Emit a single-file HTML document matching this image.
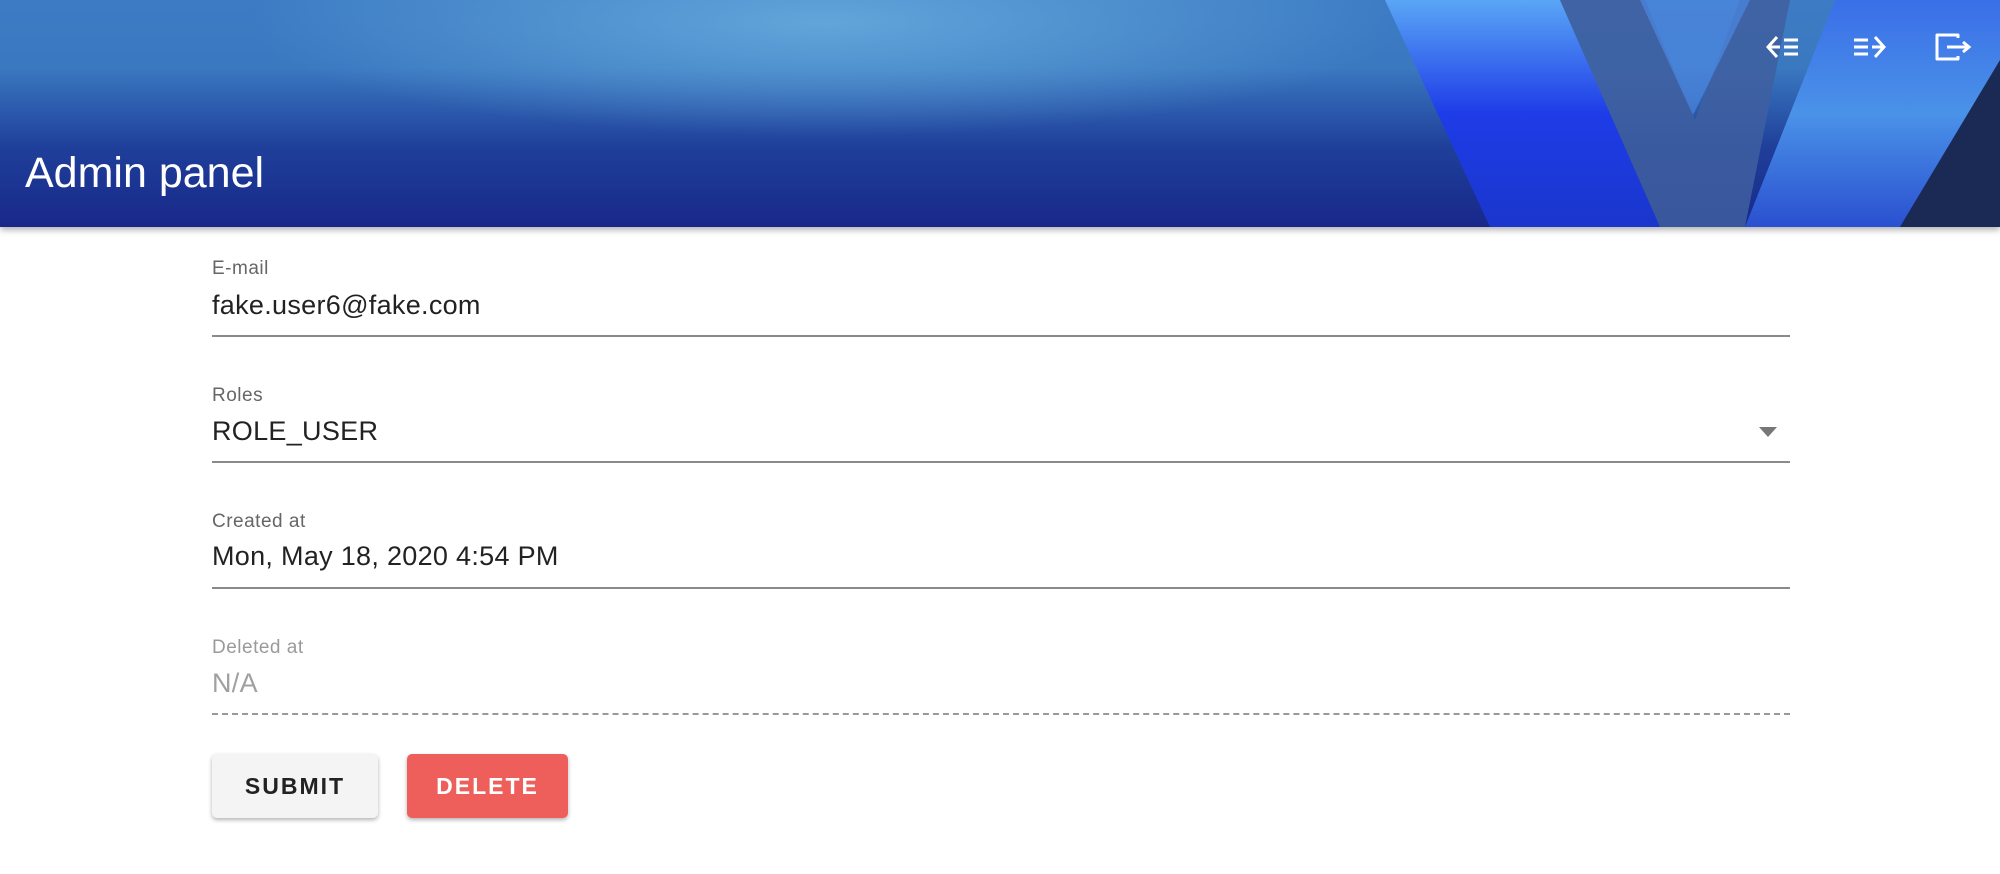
<!DOCTYPE html>
<html><head><meta charset="utf-8"><style>
body{margin:0;width:2000px;height:874px;background:#fff;font-family:"Liberation Sans",Arial,sans-serif;position:relative;overflow:hidden}
.hdr{position:absolute;left:0;top:0;width:2000px;height:227px;overflow:hidden;
background:linear-gradient(180deg,#3d7cc4 0%,#3a78c0 30%,#1f3f9a 65%,#18288a 100%);box-shadow:0 3px 6px rgba(0,0,0,.3)}
.hdr svg{position:absolute;left:0;top:0}
.title{position:absolute;left:25px;top:148px;color:#fff;font-size:43px;line-height:50px}
.lab{position:absolute;left:212px;font-size:19px;letter-spacing:.5px;color:#666}
.val{position:absolute;left:212px;font-size:27px;letter-spacing:.3px;color:#222}
.line{position:absolute;left:212px;width:1578px;height:0;border-top:2px solid #8a8a8a}
.btn{position:absolute;top:754px;height:64px;border-radius:5px;font-size:23px;letter-spacing:2px;font-weight:bold;text-align:center;line-height:64px;box-shadow:0 2px 4px rgba(0,0,0,.3)}
</style></head><body>
<div class="hdr">
<svg width="2000" height="227">
<defs>
<radialGradient id="g1" cx="0.5" cy="0.1" r="0.5"><stop offset="0" stop-color="#6ab0e0" stop-opacity=".8"/><stop offset="1" stop-color="#6ab0e0" stop-opacity="0"/></radialGradient>
<linearGradient id="g2" x1="0" y1="0" x2="0" y2="1"><stop offset="0" stop-color="#5aa6f5"/><stop offset=".5" stop-color="#1e3ce8"/><stop offset="1" stop-color="#1a36cc"/></linearGradient>
<linearGradient id="g3" x1="0" y1="0" x2="0" y2="1"><stop offset="0" stop-color="#3a6fe8"/><stop offset=".5" stop-color="#4a92e8"/><stop offset="1" stop-color="#2a50d0"/></linearGradient>
</defs>
<rect x="250" y="0" width="1150" height="227" fill="url(#g1)"/>
<polygon points="1385,0 1560,0 1660,227 1490,227" fill="url(#g2)"/>
<polygon points="1560,0 1645,0 1695,120 1740,0 1790,0 1745,227 1660,227" fill="#3f5fa0" opacity=".85"/>
<polygon points="1640,0 1750,0 1693,115" fill="#4d88e0" opacity=".7"/>
<polygon points="1835,0 2000,0 2000,60 1900,227 1745,227" fill="url(#g3)"/>
<polygon points="2000,60 2000,227 1900,227" fill="#1a2a55"/>
</svg>
<div class="title">Admin panel</div>
<svg style="left:1764px;top:32px" width="36" height="30" viewBox="0 0 36 30" fill="none" stroke="#fff" stroke-width="3"><path d="M13 5 L4 15 L13 25 M4 15 H16 M20 8 H34 M20 15 H34 M20 22 H34"/></svg>
<svg style="left:1852px;top:32px" width="36" height="30" viewBox="0 0 36 30" fill="none" stroke="#fff" stroke-width="3"><path d="M2 8 H16 M2 15 H16 M2 22 H16 M23 5 L32 15 L23 25 M20 15 H32"/></svg>
<svg style="left:1934px;top:30px" width="40" height="34" viewBox="0 0 40 34" fill="none" stroke="#fff" stroke-width="3"><path d="M24 8 V5 H3 V29 H24 V26" stroke-linejoin="round"/><path d="M13 17 H33 M29 12 L35 17 L29 22" /></svg>
</div>
<div class="lab" style="top:258px">E-mail</div>
<div class="val" style="top:290px">fake.user6@fake.com</div>
<div class="line" style="top:335px"></div>
<div class="lab" style="top:385px">Roles</div>
<div class="val" style="top:416px">ROLE_USER</div>
<svg style="position:absolute;left:1758px;top:426px" width="20" height="12"><polygon points="1,1 19,1 10,11" fill="#777"/></svg>
<div class="line" style="top:461px"></div>
<div class="lab" style="top:511px">Created at</div>
<div class="val" style="top:541px">Mon, May 18, 2020 4:54 PM</div>
<div class="line" style="top:587px"></div>
<div class="lab" style="top:637px;color:#9a9a9a">Deleted at</div>
<div class="val" style="top:668px;color:#a0a0a0">N/A</div>
<div class="line" style="top:713px;border-top:2px dashed #999"></div>
<div class="btn" style="left:212px;width:166px;background:#f4f4f4;color:#222">SUBMIT</div>
<div class="btn" style="left:407px;width:161px;background:#ee5f5b;color:#fff">DELETE</div>
</body></html>
